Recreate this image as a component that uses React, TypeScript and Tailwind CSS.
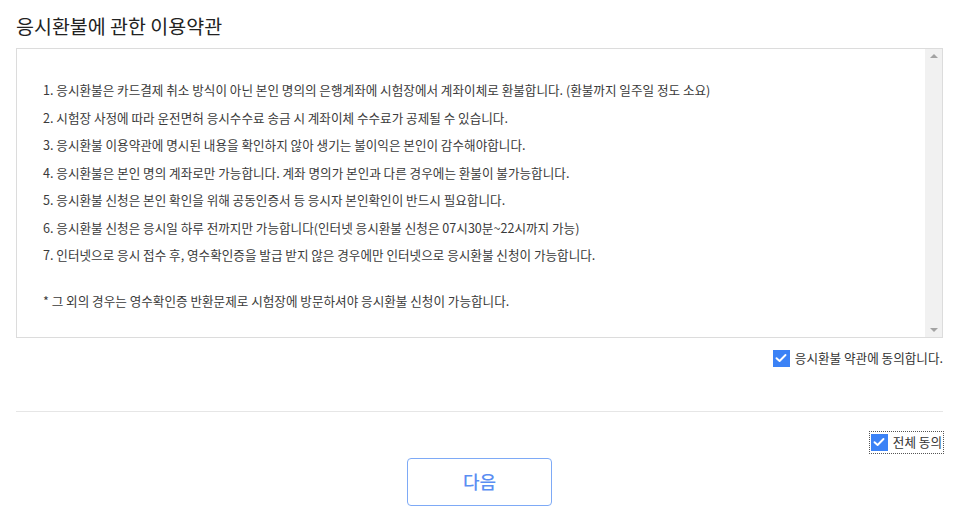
import React from "react";

const lines = [
  "1. 응시환불은 카드결제 취소 방식이 아닌 본인 명의의 은행계좌에 시험장에서 계좌이체로 환불합니다. (환불까지 일주일 정도 소요)",
  "2. 시험장 사정에 따라 운전면허 응시수수료 송금 시 계좌이체 수수료가 공제될 수 있습니다.",
  "3. 응시환불 이용약관에 명시된 내용을 확인하지 않아 생기는 불이익은 본인이 감수해야합니다.",
  "4. 응시환불은 본인 명의 계좌로만 가능합니다. 계좌 명의가 본인과 다른 경우에는 환불이 불가능합니다.",
  "5. 응시환불 신청은 본인 확인을 위해 공동인증서 등 응시자 본인확인이 반드시 필요합니다.",
  "6. 응시환불 신청은 응시일 하루 전까지만 가능합니다(인터넷 응시환불 신청은 07시30분~22시까지 가능)",
  "7. 인터넷으로 응시 접수 후, 영수확인증을 발급 받지 않은 경우에만 인터넷으로 응시환불 신청이 가능합니다.",
];

function Check() {
  return (
    <span className="flex h-[17px] w-[17px] items-center justify-center bg-[#3b82f6]">
      <svg width="12" height="10" viewBox="0 0 12 10" fill="none">
        <path d="M1.5 5.2 L4.6 8 L10.5 2" stroke="white" strokeWidth="1.9" strokeLinecap="round" strokeLinejoin="round" />
      </svg>
    </span>
  );
}

export default function App() {
  return (
    <div
      className="w-[966px] h-[529px] bg-white px-4 text-[#333]"
      style={{ fontFamily: '"Noto Sans CJK KR", "Noto Sans", sans-serif' }}
    >
      <h1 className="pt-[13px] text-[19.5px] leading-[26px] text-[#222]">응시환불에 관한 이용약관</h1>
      <div className="mt-[9px] flex h-[290px] w-[927px] border border-[#dcdcdc]">
        <div className="flex-1 pl-[26px] pt-[27px] text-[12.6px] text-[#3a3a3a]">
          {lines.map((l) => (
            <p key={l} className="leading-[27.5px]">{l}</p>
          ))}
          <p className="mt-[18px] leading-[27.5px]">* 그 외의 경우는 영수확인증 반환문제로 시험장에 방문하셔야 응시환불 신청이 가능합니다.</p>
        </div>
        <div className="flex w-[17px] flex-col items-center justify-between bg-[#f1f1f1] py-[5px]">
          <span className="h-0 w-0 border-x-[4px] border-b-[4px] border-x-transparent border-b-[#a3a3a3]" />
          <span className="h-0 w-0 border-x-[4px] border-t-[4px] border-x-transparent border-t-[#a3a3a3]" />
        </div>
      </div>
      <div className="mt-[11px] flex w-[927px] justify-end">
        <label className="flex items-center gap-[5px] text-[12.6px] text-[#333]">
          <Check />
          <span>응시환불 약관에 동의합니다.</span>
        </label>
      </div>
      <div className="mt-[43px] h-px w-[927px] bg-[#e6e6e6]" />
      <div className="mt-[20px] flex w-[927px] justify-end">
        <label className="flex items-center gap-[5px] px-[1px] py-[1px] outline outline-1 outline-dotted outline-[#555] text-[12.6px] text-[#333]">
          <Check />
          <span>전체 동의</span>
        </label>
      </div>
      <div className="mt-[5px] flex w-[927px] justify-center">
        <button className="h-[48px] w-[145px] rounded-[4px] border border-[#7eaaf6] bg-white text-[18px] font-medium text-[#5b8ef2]">
          다음
        </button>
      </div>
    </div>
  );
}
